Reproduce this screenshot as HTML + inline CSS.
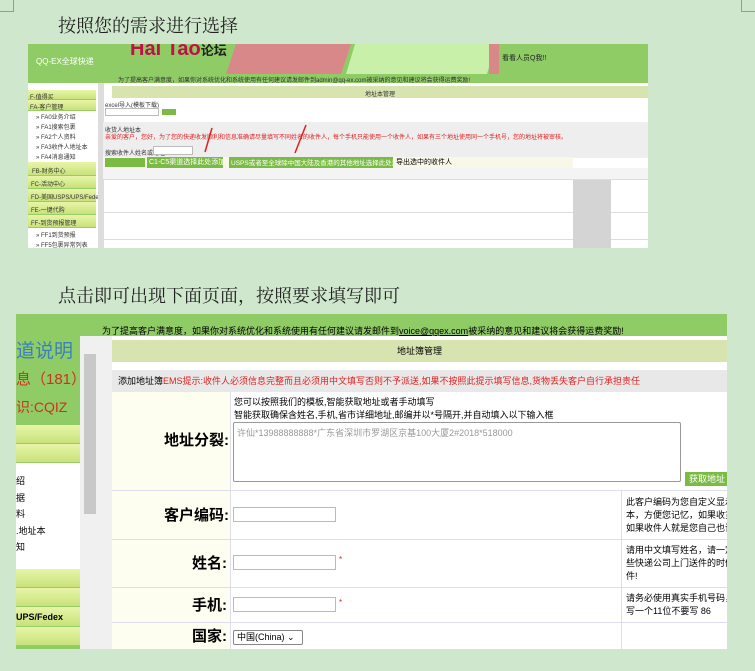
<!DOCTYPE html>
<html><head><meta charset="utf-8"><style>
*{margin:0;padding:0;box-sizing:border-box}
body{width:755px;height:671px;background:#cfe7cc;font-family:"Liberation Sans","Noto Sans CJK SC",sans-serif;position:relative;overflow:hidden}
.a{position:absolute}
.t{font-family:"Noto Serif CJK SC","Liberation Serif",serif;font-size:18px;color:#222}
.s{font-size:6px;color:#333;white-space:nowrap}
.sb{background:linear-gradient(#e8f5a8,#c8e27a);border-bottom:1px solid #9c6;}
.L{font-size:15px;font-weight:bold;line-height:1}
</style></head><body>
<div class="a" style="left:0;top:0;width:14px;height:12px;border-right:1px solid #999;border-bottom:1px solid #999"></div>
<div class="a" style="right:0;top:0;width:14px;height:12px;border-left:1px solid #999;border-bottom:1px solid #999"></div>
<div class="a t" style="left:58px;top:12px">按照您的需求进行选择</div>

<!-- top screenshot -->
<div class="a" style="left:28px;top:44px;width:620px;height:204px;background:#fff;overflow:hidden">
 <div class="a" style="left:0;top:0;width:620px;height:39px;background:#8fcc66"></div>
 <div class="a" style="left:8px;top:12px;color:#fff;font-size:8px">QQ-EX全球快递</div>
 <div class="a" style="left:102px;top:-6px;color:#c01048;font-size:20px;font-weight:bold">Hai Tao<span style="font-size:13px;color:#222">论坛</span></div>
 <div class="a" style="left:198px;top:0;width:125px;height:30px;background:#d88888;clip-path:polygon(8% 0,100% 0,92% 100%,0 100%)"></div>
 <div class="a" style="left:318px;top:0;width:150px;height:30px;background:#c8f0a8;clip-path:polygon(6% 0,100% 0,94% 100%,0 100%)"></div>
 <div class="a" style="left:461px;top:0;width:10px;height:30px;background:#d88888"></div>
 <div class="a" style="left:474px;top:9px;font-size:7px;color:#222">看看人员Q我!!</div>
 <div class="a s" style="left:90px;top:31px">为了提高客户满意度，如果你对系统优化和系统使用有任何建议请发邮件到admin@qq-ex.com被采纳的意见和建议将会获得运费奖励!</div>
 <div class="a" style="left:0;top:39px;width:68px;height:165px;background:#fff"></div>
 <div class="a sb s" style="left:0;top:46px;width:68px;height:10px;padding:2px">F-值得买</div>
 <div class="a sb s" style="left:0;top:56px;width:68px;height:11px;padding:2px">FA-客户管理</div>
 <div class="a s" style="left:8px;top:69px;line-height:10px">» FA0业务介绍<br>» FA1搜索包裹<br>» FA2个人资料<br>» FA3收件人地址本<br>» FA4消息通知</div>
 <div class="a sb s" style="left:0;top:118px;width:68px;height:14px;padding:4px">FB-财务中心</div>
 <div class="a sb s" style="left:0;top:132px;width:68px;height:13px;padding:3px">FC-活动中心</div>
 <div class="a sb s" style="left:0;top:145px;width:68px;height:13px;padding:3px">FD-美国USPS/UPS/Fedex</div>
 <div class="a sb s" style="left:0;top:158px;width:68px;height:13px;padding:3px">FE-一键代购</div>
 <div class="a sb s" style="left:0;top:171px;width:68px;height:13px;padding:3px">FF-到货预报管理</div>
 <div class="a s" style="left:8px;top:187px;line-height:10px">» FF1到货预报<br>» FF5包裹异常列表</div>
 <div class="a" style="left:70px;top:39px;width:6px;height:165px;background:#ddd"></div>
 <div class="a" style="left:84px;top:42px;width:536px;height:12px;background:#d8e4b0;text-align:center;line-height:12px" ><span class="s">地址本管理</span></div>
 <div class="a s" style="left:77px;top:56px">excel导入(模板下载)</div>
 <div class="a" style="left:77px;top:64px;width:54px;height:8px;border:1px solid #bbb"></div>
 <div class="a" style="left:134px;top:65px;width:14px;height:6px;background:#7bbb44"></div>
 <div class="a" style="left:75px;top:78px;width:545px;height:36px;background:#eee"></div>
 <div class="a s" style="left:77px;top:81px">收货人地址本</div>
 <div class="a s" style="left:77px;top:88px;color:#e02020">亲爱的客户，您好，为了您的快递收发顺利和信息准确请尽量填写不同姓名的收件人，每个手机只能使用一个收件人，如果有三个地址使用同一个手机号，您的地址将被审核。</div>
 <div class="a s" style="left:77px;top:104px">搜索收件人姓名或地址</div>
 <div class="a" style="left:125px;top:102px;width:40px;height:9px;border:1px solid #bbb;background:#fff"></div>
 <div class="a" style="left:75px;top:113px;width:470px;height:11px;background:#f8f8e8"></div>
 <div class="a" style="left:77px;top:114px;width:40px;height:9px;background:#7bbb44"></div>
 <div class="a" style="left:119px;top:113px;width:76px;height:11px;background:#7bbb44;color:#fff;font-size:7px;white-space:nowrap;padding-left:2px;overflow:hidden">C1-C5渠道选择此处添加</div>
 <div class="a" style="left:201px;top:113px;width:164px;height:11px;background:#7bbb44;color:#fff;font-size:6.5px;white-space:nowrap;padding-left:2px;overflow:hidden">USPS或者至全球除中国大陆及香港的其他地址选择此处添加</div>
 <div class="a" style="left:368px;top:113px;font-size:7px">导出选中的收件人</div>
 <div class="a" style="left:75px;top:124px;width:545px;height:12px;background:#f4f4f4;border-bottom:1px solid #ddd"></div>
 <div class="a" style="left:75px;top:168px;width:545px;height:1px;background:#ddd"></div>
 <div class="a" style="left:75px;top:195px;width:545px;height:1px;background:#ddd"></div>
 <div class="a" style="left:545px;top:136px;width:38px;height:68px;background:#d4d4d4"></div>
</div>
<svg class="a" style="left:0;top:0" width="755" height="260"><path d="M212 128 L205 152 M306 125 L295 153" stroke="#e02020" stroke-width="1.5"/></svg>

<div class="a t" style="left:58px;top:282px">点击即可出现下面页面，按照要求填写即可</div>

<!-- bottom screenshot -->
<div class="a" style="left:16px;top:314px;width:711px;height:335px;background:#fff;overflow:hidden;font-size:9px">
 <div class="a" style="left:0;top:0;width:711px;height:22px;background:#8fcc66"></div>
 <div class="a" style="left:0;top:0;width:64px;height:336px;background:#8fcc66"></div>
 <div class="a" style="left:86px;top:10px;font-size:9px;white-space:nowrap">为了提高客户满意度，如果你对系统优化和系统使用有任何建议请发邮件到<u>voice@qqex.com</u>被采纳的意见和建议将会获得运费奖励!</div>
 <div class="a" style="left:0;top:22px;color:#3a80c0;font-size:19px">道说明</div>
 <div class="a" style="left:0;top:54px;color:#d03020;font-size:15px">息（181）</div>
 <div class="a" style="left:0;top:83px;color:#d03020;font-size:14px">识:CQIZ</div>
 <div class="a sb" style="left:0;top:111px;width:64px;height:19px"></div>
 <div class="a sb" style="left:0;top:130px;width:64px;height:19px"></div>
 <div class="a" style="left:0;top:149px;width:64px;height:106px;background:#fff;font-size:9px;line-height:16.5px;padding-top:10px">绍<br>据<br>料<br>.地址本<br>知</div>
 <div class="a sb" style="left:0;top:255px;width:64px;height:19px"></div>
 <div class="a sb" style="left:0;top:274px;width:64px;height:19px"></div>
 <div class="a sb" style="left:0;top:293px;width:64px;height:20px;font-size:9px;font-weight:bold;padding-top:5px">UPS/Fedex</div>
 <div class="a sb" style="left:0;top:313px;width:64px;height:19px"></div>
 <div class="a" style="left:64px;top:22px;width:32px;height:314px;background:#f0f0f0"></div>
 <div class="a" style="left:68px;top:40px;width:12px;height:160px;background:#c8c8c8"></div>
 <div class="a" style="left:96px;top:26px;width:615px;height:22px;background:#d8e4b0;text-align:center;font-size:9px;line-height:22px">地址簿管理</div>
 <div class="a" style="left:96px;top:56px;width:615px;height:22px;background:#e8e8e8;font-size:9px;line-height:22px;padding-left:6px;white-space:nowrap">添加地址簿<span style="color:#e02020">EMS提示:收件人必须信息完整而且必须用中文填写否则不予派送,如果不按照此提示填写信息,货物丢失客户自行承担责任</span></div>
 <div class="a" style="left:96px;top:78px;width:118px;height:258px;background:#fdfdf0"></div>
 <div class="a" style="left:96px;top:176px;width:615px;height:1px;background:#dde"></div>
 <div class="a" style="left:96px;top:225px;width:615px;height:1px;background:#dde"></div>
 <div class="a" style="left:96px;top:273px;width:615px;height:1px;background:#dde"></div>
 <div class="a" style="left:96px;top:308px;width:615px;height:1px;background:#dde"></div>
 <div class="a" style="left:214px;top:78px;width:1px;height:258px;background:#dde"></div>
 <div class="a" style="left:605px;top:177px;width:1px;height:160px;background:#dde"></div>
 <div class="a L" style="left:148px;top:119px">地址分裂:</div>
 <div class="a L" style="left:148px;top:194px">客户编码:</div>
 <div class="a L" style="left:176px;top:242px">姓名:</div>
 <div class="a L" style="left:176px;top:284px">手机:</div>
 <div class="a L" style="left:176px;top:315px">国家:</div>
 <div class="a" style="left:218px;top:82px;font-size:9px;line-height:13px;white-space:nowrap">您可以按照我们的模板,智能获取地址或者手动填写<br>智能获取确保含姓名,手机,省市详细地址,邮编并以*号隔开,并自动填入以下输入框</div>
 <div class="a" style="left:217px;top:108px;width:448px;height:60px;border:1px solid #999;border-radius:2px;color:#999;font-size:9px;padding:3px">许仙*13988888888*广东省深圳市罗湖区京基100大厦2#2018*518000</div>
 <div class="a" style="left:669px;top:158px;width:44px;height:14px;background:#7bbb44;color:#fff;font-size:9px;text-align:center;line-height:14px">获取地址</div>
 <div class="a" style="left:217px;top:193px;width:103px;height:15px;border:1px solid #bbb"></div>
 <div class="a" style="left:217px;top:241px;width:103px;height:15px;border:1px solid #bbb"></div>
 <div class="a" style="left:323px;top:241px;color:#e02020;font-size:8px">*</div>
 <div class="a" style="left:217px;top:283px;width:103px;height:15px;border:1px solid #bbb"></div>
 <div class="a" style="left:323px;top:284px;color:#e02020;font-size:8px">*</div>
 <div class="a" style="left:217px;top:316px;width:70px;height:15px;border:1px solid #888;border-radius:2px;font-size:9px;padding-left:3px;line-height:13px">中国(China) ⌄</div>
 <div class="a" style="left:610px;top:182px;font-size:9px;line-height:13px;white-space:nowrap">此客户编码为您自定义显示<br>本，方便您记忆，如果收货<br>如果收件人就是您自己也请</div>
 <div class="a" style="left:610px;top:230px;font-size:9px;line-height:13px;white-space:nowrap">请用中文填写姓名，请一定<br>些快递公司上门送件的时候<br>件!</div>
 <div class="a" style="left:610px;top:278px;font-size:9px;line-height:13px;white-space:nowrap">请务必使用真实手机号码，<br>写一个11位不要写 86</div>
</div>
</body></html>
